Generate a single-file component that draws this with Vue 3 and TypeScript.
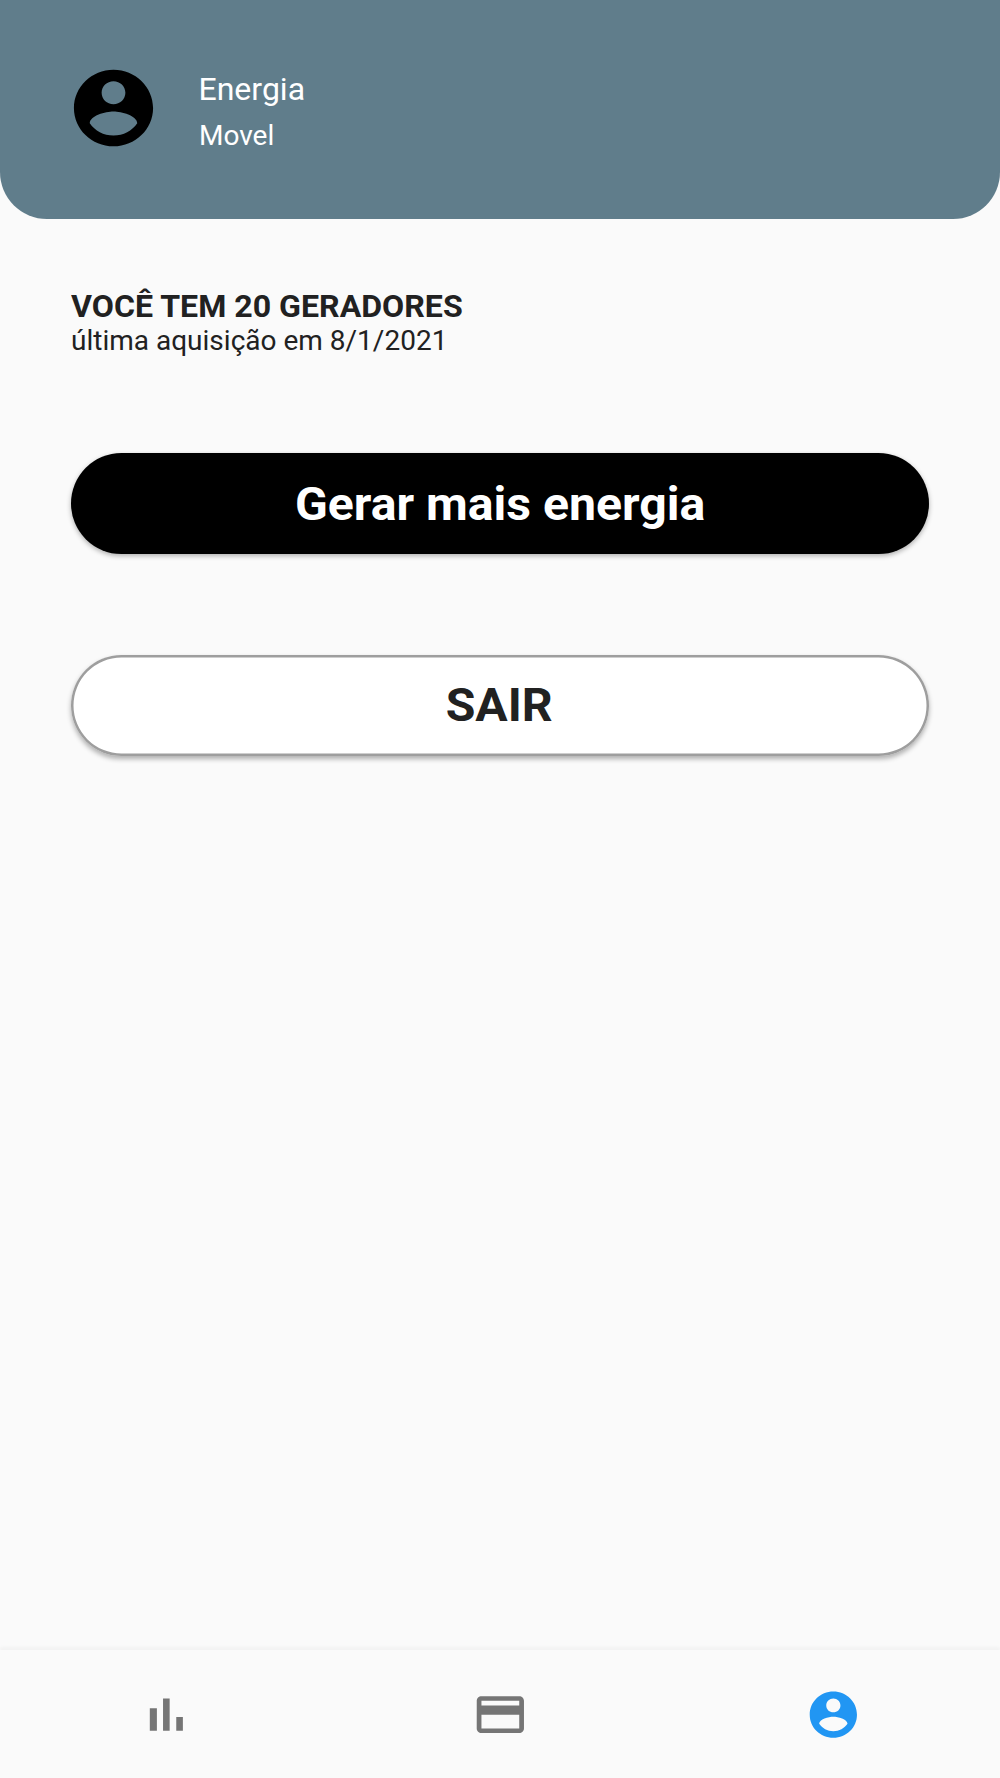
<script setup lang="ts">
interface NavItem {
  name: string
  path: string
  active?: boolean
}

const account =
  'M12 2C6.48 2 2 6.48 2 12s4.48 10 10 10 10-4.48 10-10S17.52 2 12 2zm0 3c1.66 0 3 1.34 3 3s-1.34 3-3 3-3-1.34-3-3 1.34-3 3-3zm0 14.2c-2.5 0-4.71-1.28-6-3.22.03-1.99 4-3.08 6-3.08 1.99 0 5.97 1.09 6 3.08-1.29 1.94-3.5 3.22-6 3.22z'

const items: NavItem[] = [
  { name: 'stats', path: 'M5 9.2h3V19H5zM10.6 5h2.8v14h-2.8zm5.6 8H19v6h-2.8z' },
  {
    name: 'card',
    path: 'M20 4H4c-1.11 0-1.99.89-1.99 2L2 18c0 1.11.89 2 2 2h16c1.11 0 2-.89 2-2V6c0-1.11-.89-2-2-2zm0 14H4v-6h16v6zm0-10H4V6h16v2z',
  },
  { name: 'account', path: account, active: true },
]
</script>

<template>
  <div class="screen">
    <header class="header">
      <svg class="avatar" viewBox="0 0 24 24" preserveAspectRatio="none"><path :d="account" /></svg>
      <div class="who">
        <div class="first"><span>Energia</span></div>
        <div class="last"><span>Movel</span></div>
      </div>
    </header>
    <main class="content">
      <div class="title"><span>VOCÊ TEM 20 GERADORES</span></div>
      <div class="subtitle"><span>última aquisição em 8/1/2021</span></div>
      <button class="btn primary"><span>Gerar mais energia</span></button>
      <button class="btn outline"><span>SAIR</span></button>
    </main>
    <nav class="nav">
      <a v-for="item in items" :key="item.name" class="tab" :class="{ active: item.active }">
        <svg viewBox="0 0 24 24" preserveAspectRatio="none"><path :d="item.path" /></svg>
      </a>
    </nav>
  </div>
</template>

<style>
body {
  margin: 0;
  background: #fafafa;
}
</style>

<style scoped>
.screen {
  width: 1000px;
  height: 1778px;
  display: flex;
  flex-direction: column;
  overflow: hidden;
  background: #fafafa;
  color: #212121;
  font-family: Roboto, sans-serif;
}
.screen span {
  display: inline-block;
  white-space: nowrap;
  transform-origin: left center;
}
.header {
  box-sizing: border-box;
  height: 218.5px;
  padding: 62px 0 0 66px;
  display: flex;
  align-items: flex-start;
  background: #607d8b;
  border-radius: 0 0 47px 47px;
  color: #fff;
}
.avatar {
  width: 95px;
  height: 92px;
  flex: none;
}
.who {
  margin-left: 37.5px;
  padding-top: 8px;
}
.first {
  font-size: 32px;
  line-height: 38px;
}
.last {
  margin-top: 12px;
  font-size: 27.6px;
  line-height: 32px;
}
.last span,
.subtitle span {
  transform: scaleX(1.015);
}
.content {
  flex: 1;
  padding: 68px 71px 0;
}
.title {
  height: 38px;
  font-size: 32.2px;
  line-height: 38px;
  font-weight: 700;
}
.title span {
  transform: scaleX(0.998);
}
.subtitle {
  height: 32px;
  font-size: 27.6px;
  line-height: 32px;
}
.btn {
  box-sizing: border-box;
  display: flex;
  align-items: center;
  justify-content: center;
  width: 858px;
  height: 101px;
  padding: 0;
  border: 0;
  border-radius: 51px;
  font: 700 47px/54px Roboto, sans-serif;
  box-shadow: 0 2px 5px rgba(0, 0, 0, 0.3);
}
.btn span {
  transform: scaleX(1.025);
  transform-origin: center;
}
.primary {
  margin-top: 96px;
  background: #000;
  color: #fff;
}
.primary span {
  margin-top: 1px;
}
.outline {
  margin-top: 101px;
  background: #fff;
  color: #212121;
  box-shadow:
    inset 0 0 0 2.5px #9e9e9e,
    0 3px 5px rgba(0, 0, 0, 0.3);
}
.outline span {
  margin-right: 2px;
}
.nav {
  height: 128px;
  display: flex;
  background: #fafafa;
  box-shadow: 0 -3px 3px rgba(0, 0, 0, 0.032);
}
.tab {
  flex: 1;
  display: flex;
  align-items: center;
  justify-content: center;
}
.tab svg {
  width: 56.7px;
  height: 55.3px;
  margin-top: 0.6px;
  fill: #757575;
}
.tab.active svg {
  fill: #2196f3;
}
</style>
